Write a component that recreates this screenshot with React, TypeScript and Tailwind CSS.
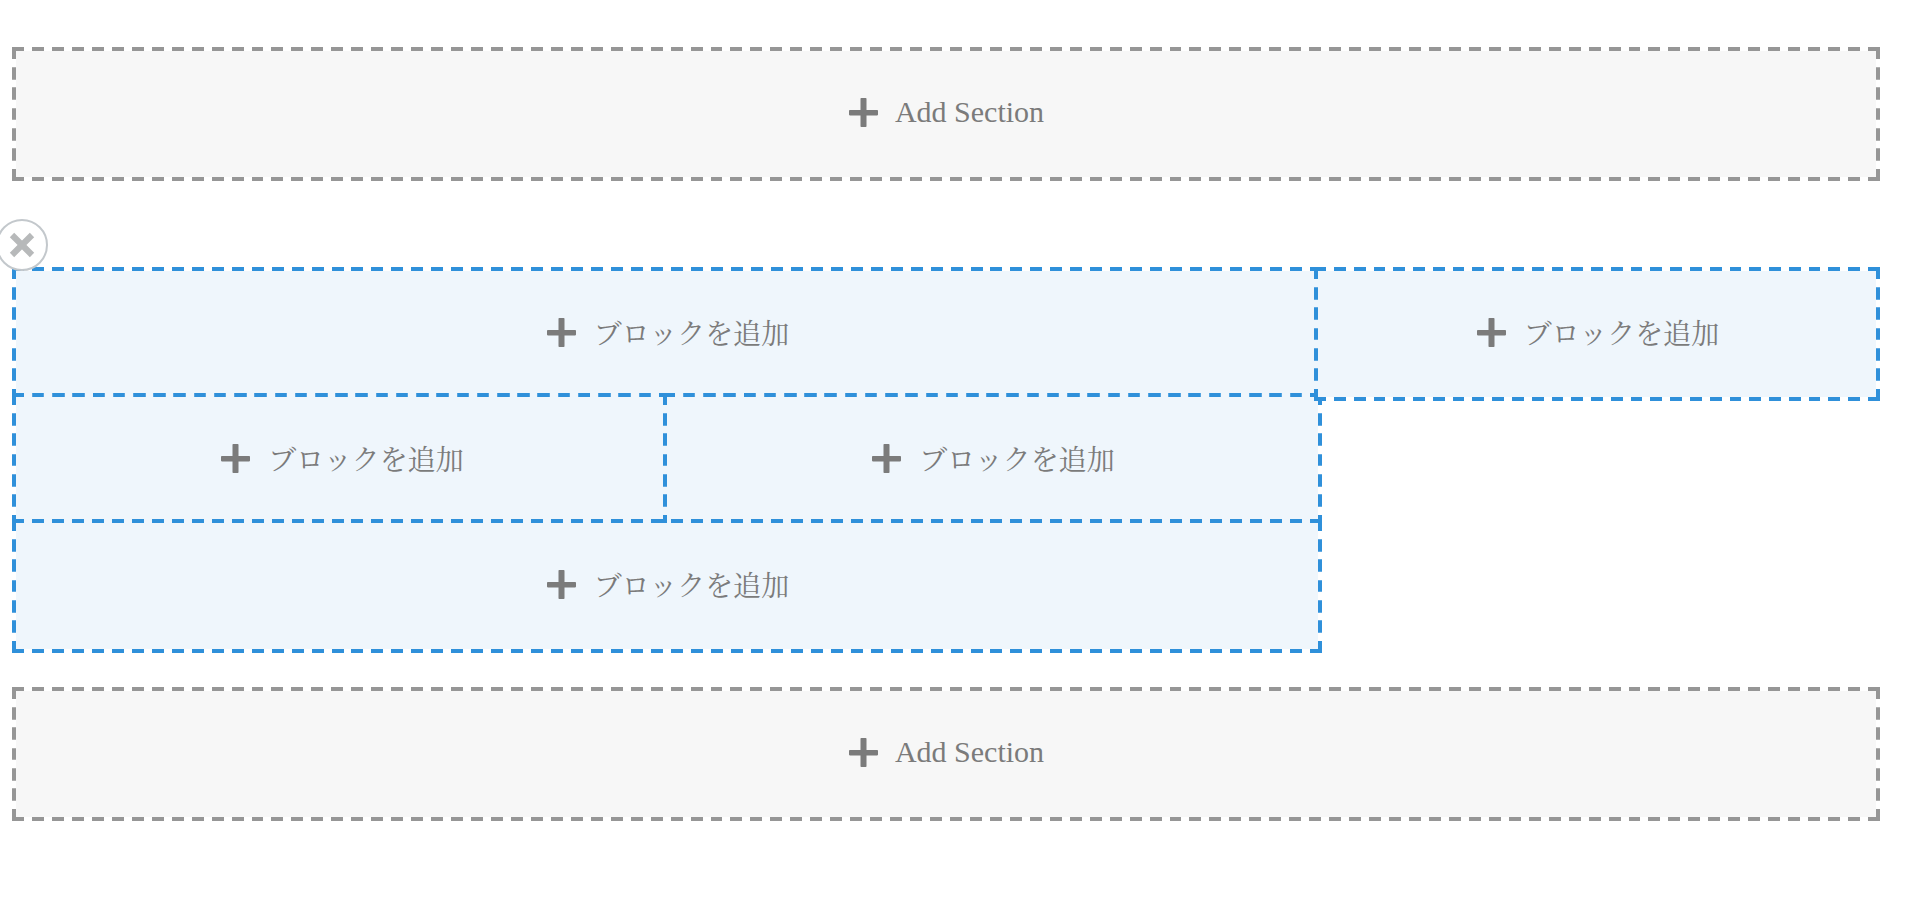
import type { ReactNode } from "react";

type AddButtonProps = {
  label: string;
};

const PlusIcon = () => (
  <svg viewBox="0 0 29 29" className="size-[29px] shrink-0" fill="#7b7b7b" aria-hidden="true">
    <rect x="11.5" y="0" width="6" height="29" rx="0.8" />
    <rect x="0" y="12" width="29" height="5.4" rx="0.8" />
  </svg>
);

const CloseIcon = () => (
  <svg viewBox="0 0 26 26" className="size-[26px]" aria-hidden="true">
    <path d="M3 3 23 23M23 3 3 23" stroke="#b7b9ba" strokeWidth="6.2" />
  </svg>
);

// Long dashes: the corner slices hold the L shape, the edge slices repeat a 12px dash
const AddSection = ({ label }: AddButtonProps) => (
  <button
    type="button"
    className="flex h-[134px] w-full cursor-pointer items-center justify-center gap-[17px] border-4 border-solid border-transparent bg-[#f7f7f7] bg-clip-padding pb-1 pl-px font-['Liberation_Serif',serif] text-[30px] leading-9 text-[#7b7b7b] [border-image:url(data:image/svg+xml,%3Csvg%20xmlns=%27http://www.w3.org/2000/svg%27%20width=%2752%27%20height=%2752%27%20fill=%27%23969696%27%3E%3Cpath%20d=%27M0%200h12v4H4v8H0zM20%200h12v4H20zM40%200h12v12h-4V4h-8zM0%2020h4v12H0zM48%2020h4v12h-4zM0%2040h4v8h8v4H0zM20%2048h12v4H20zM48%2040h4v12H40v-4h8z%27/%3E%3C/svg%3E)_16/16px_round]"
  >
    <PlusIcon />
    <span>{label}</span>
  </button>
);

const AddBlock = ({ label }: AddButtonProps) => (
  <button
    type="button"
    className="flex h-[134px] w-full cursor-pointer items-center justify-center gap-[18px] border-4 border-solid border-transparent bg-[#eff6fc] bg-clip-padding pb-1 pl-0.5 font-['Noto_Serif_CJK_JP','Noto_Sans_CJK_JP',serif] text-[28px] leading-9 text-[#7b7b7b] [border-image:url(data:image/svg+xml,%3Csvg%20xmlns=%27http://www.w3.org/2000/svg%27%20width=%2752%27%20height=%2752%27%20fill=%27%232f90da%27%3E%3Cpath%20d=%27M0%200h12v4H4v8H0zM20%200h12v4H20zM40%200h12v12h-4V4h-8zM0%2020h4v12H0zM48%2020h4v12h-4zM0%2040h4v8h8v4H0zM20%2048h12v4H20zM48%2040h4v12H40v-4h8z%27/%3E%3C/svg%3E)_16/16px_round]"
  >
    <PlusIcon />
    <span lang="ja">{label}</span>
  </button>
);

// Neighbouring cells overlap by 8px so that they share one dashed line
const Cell = ({ className, children }: { className: string; children: ReactNode }) => (
  <div className={className}>
    <div className="-mr-2 -mb-2">{children}</div>
  </div>
);

export default function App() {
  return (
    <main className="min-h-screen overflow-x-hidden bg-white pt-[47px] pr-[26px] pb-12 pl-3">
      <AddSection label="Add Section" />

      <section className="relative mt-[86px] flex items-start pr-2 pb-2">
        <div className="flex w-7/10 flex-col">
          <Cell className="w-full">
            <AddBlock label="ブロックを追加" />
          </Cell>
          <div className="flex">
            <Cell className="w-1/2">
              <AddBlock label="ブロックを追加" />
            </Cell>
            <Cell className="w-1/2">
              <AddBlock label="ブロックを追加" />
            </Cell>
          </div>
          <Cell className="w-full">
            <AddBlock label="ブロックを追加" />
          </Cell>
        </div>
        <Cell className="w-3/10">
          <AddBlock label="ブロックを追加" />
        </Cell>

        {/* Remove the section */}
        <button
          type="button"
          aria-label="Close"
          className="absolute -top-12 -left-4 flex size-[52px] cursor-pointer items-center justify-center rounded-full border-2 border-[#c3c8cc] bg-white"
        >
          <CloseIcon />
        </button>
      </section>

      <div className="mt-[34px]">
        <AddSection label="Add Section" />
      </div>
    </main>
  );
}
